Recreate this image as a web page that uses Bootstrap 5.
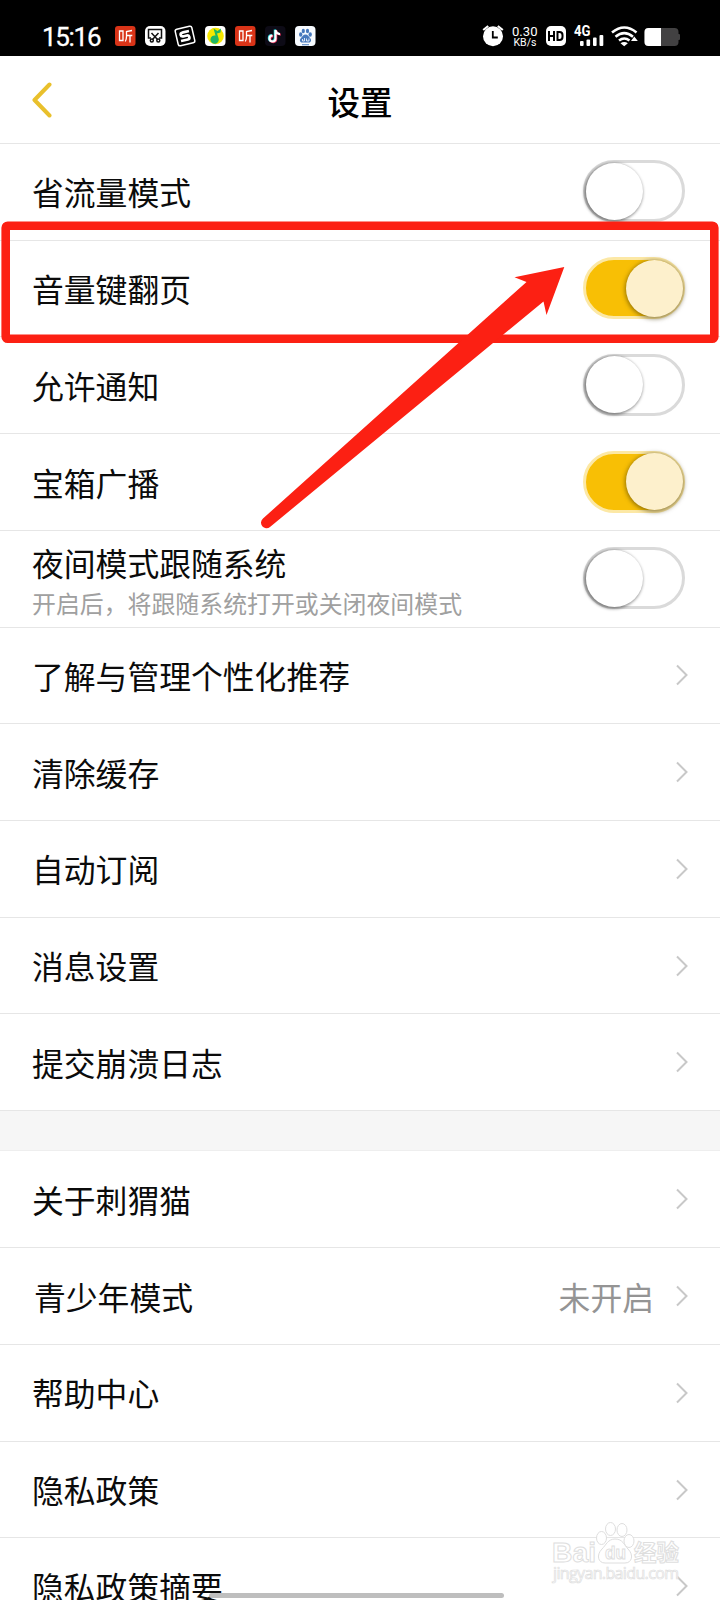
<!DOCTYPE html>
<html lang="zh-CN">
<head>
<meta charset="utf-8">
<meta name="viewport" content="width=device-width, initial-scale=1">
<title>设置</title>
<link href="https://cdn.jsdelivr.net/npm/bootstrap@5.3.0/dist/css/bootstrap.min.css" rel="stylesheet">
<style>
  body { font-family: Roboto, "Noto Sans CJK SC", sans-serif; color: #0b0b0b; background: #fff; }
  .phone { width: 720px; height: 1600px; }
  .statusbar { height: 56px; padding: 16px 40px 0 42px; background: #000; color: #fff; }
  .clock { font-size: 26px; line-height: 42px; width: 73px; letter-spacing: -1.3px; -webkit-text-stroke: .3px #fff; }
  .statusbar svg { display: block; flex: none; }
  .topbar { height: 88px; border-bottom: 1px solid #e6e6e6; padding: 0 32px; }
  .topbar h1 { font: 500 32.5px/48px "Noto Sans CJK SC", sans-serif; color: #000; padding-top: 2px; }
  .back, .side { width: 24px; }
  .setting { height: 96.72px; border: 0; border-bottom: 1px solid #e6e6e6; border-radius: 0; padding: 0 31px 0 32px;
             font: 400 31.8px/44px "Noto Sans CJK SC", sans-serif; color: #0b0b0b; background: #fff; }
  .setting small { font-size: 23.9px; line-height: 38px; color: #a0a0a0; }
  .label-text { padding-bottom: 1px; }
  .label-text.two-line { padding: 5px 0 0; }
  .youth { padding-left: 2px; }
  .setting .state { color: #949494; margin-right: 21px; }
  .switch { width: 102px; height: 62px; border: 3px solid #dadada; border-radius: 31px; margin: 0 4px 1px 0; }
  .knob { width: 57px; height: 57px; border-radius: 50%; background: #fff; margin: -.5px; box-shadow: -1px 1px 3px 1px rgba(0,0,0,.42); }
  .switch.on { border-color: #fce8a5; background: #f8bf05; justify-content: flex-end; }
  .switch.on .knob { background: #fdf0cc; box-shadow: 0 1px 4px 1px rgba(70,55,0,.55); }
  .gap-band { height: 40.3px; background: #f6f6f6; border-bottom: 1px solid #eee; }
  .homebar { left: 209px; top: 1593px; width: 295px; height: 5px; background: #bebebe; }
</style>
</head>
<body>
<div class="phone position-relative overflow-hidden">
  <header class="statusbar d-flex">
    <div class="clock">15:16</div>
    <svg width="202" height="40" viewBox="115 16 202 40">
      <g id="listen">
        <rect x="115" y="26" width="20.5" height="20" rx="3" fill="#d93418"/>
        <g fill="none" stroke="#fff" stroke-width="1.3"><path d="M119.500 31h3.500v9.500h-3.500zM132 30.500l-5.500 1v5q0 3-1.200 5M126.500 35.500h5.800M130 35.500v7"/></g>
      </g>
      <g>
        <rect x="145" y="26" width="20.500" height="20" rx="5" fill="#fff"/>
        <g fill="none" stroke="#111" stroke-width="1.500"><path d="M151 38h-2.500v-8.500h13v8.500H159M151.500 33l6 6.500M158.500 33l-6 6.500"/><circle cx="151.800" cy="40.500" r="1.500"/><circle cx="158.300" cy="40.500" r="1.500"/></g>
      </g>
      <g transform="rotate(-13 185 36)" fill="none" stroke="#fff">
        <rect x="176.500" y="27.500" width="17" height="17" rx="2" stroke-width="1.500"/>
        <path d="M190 32h-6q-3 0-3 2t3 2h3q2 0 2 2t-2 2h-7" stroke-width="2.700"/>
      </g>
      <rect x="205" y="26" width="20.500" height="20" rx="4" fill="#fff"/>
      <circle cx="215.500" cy="36" r="8.300" fill="#f7e800"/>
      <path d="M213.500 28.500l4 2.500 3.500-2.500-.5 4-3.500 1 1.500 4.500a4.200 4.200 0 1 1-3-2.500z" fill="#20b663"/>
      <use href="#listen" x="120"/>
      <rect x="265" y="26" width="20.500" height="20" rx="4" fill="#0d0b16"/>
      <g fill="none" stroke-width="2.100"><path d="M275.500 30v8.500a3 3 0 1 1-3-3M275.500 30q1 4 4.500 4" stroke="#27d9df" transform="translate(-.7 -.5)"/><path d="M275.500 30v8.500a3 3 0 1 1-3-3M275.500 30q1 4 4.500 4" stroke="#ef3460" transform="translate(.7 .6)"/><path d="M275.500 30v8.500a3 3 0 1 1-3-3M275.500 30q1 4 4.500 4" stroke="#fff"/></g>
      <rect x="295" y="26" width="20.500" height="20" rx="4" fill="#f7fbff"/>
      <g fill="#4779bd"><ellipse cx="300.700" cy="34.500" rx="1.700" ry="2.200"/><ellipse cx="303.300" cy="31" rx="1.600" ry="2.200"/><ellipse cx="307.500" cy="31" rx="1.600" ry="2.200"/><ellipse cx="310.200" cy="34.500" rx="1.700" ry="2.200"/><path d="M305.500 34.500c2.500 0 3 2 4.500 3.500 2 2 1 4.500-1 4.500h-7c-2 0-3-2.500-1-4.500 1.500-1.500 2-3.500 4.500-3.500zM302 44.300h7v1h-7z"/></g>
      <path d="M302.500 39v2h2v-3M306.500 38.500v2.500h2.500v-2.500" fill="none" stroke="#fff" stroke-width=".8"/>
    </svg>
    <svg class="ms-auto" width="200" height="40" viewBox="480 16 200 40" font-family="Roboto, sans-serif" fill="#fff">
      <circle cx="493" cy="36.200" r="10"/>
      <path d="M483.200 30l5-4M497.800 26l5 4" stroke="#fff" stroke-width="2.200"/>
      <path d="M492.800 31v6.500h5" fill="none" stroke="#000" stroke-width="1.800"/>
      <text x="512" y="35.500" font-size="13" textLength="25.500" lengthAdjust="spacingAndGlyphs">0.30</text>
      <text x="513.500" y="46" font-size="10.800" textLength="23" lengthAdjust="spacingAndGlyphs">KB/s</text>
      <rect x="546" y="26" width="20" height="20" rx="5"/>
      <path d="M549 31v10M554 31v10M549 36h5M557.500 32v8h2q3 0 3-3v-2q0-3-3-3z" fill="none" stroke="#000" stroke-width="2"/>
      <text x="574" y="36" font-size="14" font-weight="700" textLength="16.500" lengthAdjust="spacingAndGlyphs">4G</text>
      <rect x="580" y="41" width="3.600" height="5" rx="1"/><rect x="586.500" y="39.500" width="3.600" height="6.500" rx="1"/><rect x="593" y="37.500" width="3.600" height="8.500" rx="1"/><rect x="599.500" y="35" width="3.800" height="11" rx="1"/>
      <g fill="none" stroke="#fff" stroke-width="2.600"><path d="M612 32.500q12.300-10 24.500 0M615.500 36.700q8.700-7 17.500 0M619 40.500q5.300-4 10.500 0"/></g>
      <path d="M620.500 43.300q3.700-2.800 7.400 0l-3.700 3zM631 41l3.300-4.500 3.500 4.500z"/>
      <rect x="644.500" y="28" width="34" height="18" rx="4" fill="#424142"/><rect x="677" y="34" width="3" height="6" rx="1" fill="#424142"/>
      <path d="M661 28v18h-12.500q-4 0-4-4V32q0-4 4-4z"/>
    </svg>
  </header>

  <nav class="topbar d-flex align-items-center justify-content-between">
    <svg class="back" width="24" height="40" viewBox="0 0 24 40"><path d="M17.500 4.500L2.500 20 17.500 35.500" fill="none" stroke="#e9c02c" stroke-width="4" stroke-linecap="round" stroke-linejoin="round"/></svg>
    <h1 class="m-0">设置</h1>
    <span class="side"></span>
  </nav>

  <svg class="d-none"><symbol id="chev" viewBox="0 0 14 22"><path d="M2 1.500L11.500 11 2 20.500" fill="none" stroke="#c8c8c8" stroke-width="2"/></symbol></svg>

  <main>
    <div class="list-group list-group-flush">
      <div class="setting d-flex align-items-center justify-content-between"><span class="label-text">省流量模式</span><span class="switch d-flex"><span class="knob"></span></span></div>
      <div class="setting d-flex align-items-center justify-content-between"><span class="label-text">音量键翻页</span><span class="switch on d-flex"><span class="knob"></span></span></div>
      <div class="setting d-flex align-items-center justify-content-between"><span class="label-text">允许通知</span><span class="switch d-flex"><span class="knob"></span></span></div>
      <div class="setting d-flex align-items-center justify-content-between"><span class="label-text">宝箱广播</span><span class="switch on d-flex"><span class="knob"></span></span></div>
      <div class="setting d-flex align-items-center justify-content-between"><span class="label-text two-line d-flex flex-column">夜间模式跟随系统<small>开启后，将跟随系统打开或关闭夜间模式</small></span><span class="switch d-flex"><span class="knob"></span></span></div>
      <div class="setting d-flex align-items-center justify-content-between"><span class="label-text">了解与管理个性化推荐</span><svg width="14" height="22"><use href="#chev"/></svg></div>
      <div class="setting d-flex align-items-center justify-content-between"><span class="label-text">清除缓存</span><svg width="14" height="22"><use href="#chev"/></svg></div>
      <div class="setting d-flex align-items-center justify-content-between"><span class="label-text">自动订阅</span><svg width="14" height="22"><use href="#chev"/></svg></div>
      <div class="setting d-flex align-items-center justify-content-between"><span class="label-text">消息设置</span><svg width="14" height="22"><use href="#chev"/></svg></div>
      <div class="setting d-flex align-items-center justify-content-between"><span class="label-text">提交崩溃日志</span><svg width="14" height="22"><use href="#chev"/></svg></div>
    </div>
    <div class="gap-band"></div>
    <div class="list-group list-group-flush">
      <div class="setting d-flex align-items-center justify-content-between"><span class="label-text">关于刺猬猫</span><svg width="14" height="22"><use href="#chev"/></svg></div>
      <div class="setting d-flex align-items-center"><span class="label-text youth me-auto">青少年模式</span><span class="state">未开启</span><svg width="14" height="22"><use href="#chev"/></svg></div>
      <div class="setting d-flex align-items-center justify-content-between"><span class="label-text">帮助中心</span><svg width="14" height="22"><use href="#chev"/></svg></div>
      <div class="setting d-flex align-items-center justify-content-between"><span class="label-text">隐私政策</span><svg width="14" height="22"><use href="#chev"/></svg></div>
      <div class="setting d-flex align-items-center justify-content-between"><span class="label-text">隐私政策摘要</span><svg width="14" height="22"><use href="#chev"/></svg></div>
    </div>
  </main>

  <div class="homebar position-absolute rounded-pill"></div>

  <!-- highlight frame and pointing arrow -->
  <svg class="position-absolute top-0 start-0" width="720" height="560" viewBox="0 0 720 560">
    <rect x="5.700" y="225.700" width="708.600" height="113" rx="2" fill="none" stroke="#fc2013" stroke-width="8.600"/>
    <path d="M263 518.500L526.500 282 514.500 277.300 564.300 267 546.500 315 543.500 301.500 270 527A5.500 5.500 0 0 1 263 518.500z" fill="#fc2013"/>
  </svg>

  <!-- site watermark -->
  <svg class="position-absolute bottom-0 end-0" width="180" height="90" viewBox="540 1510 180 90" fill="#fff" stroke="#dedede" stroke-width="1">
    <g font-family="'Liberation Sans', sans-serif" font-weight="700">
      <text x="552" y="1562" font-size="28" textLength="44" lengthAdjust="spacingAndGlyphs">Bai</text>
      <ellipse cx="601.500" cy="1538" rx="5" ry="6.500"/><ellipse cx="610.500" cy="1529" rx="5" ry="6.500"/><ellipse cx="622" cy="1530" rx="5" ry="6.500"/><ellipse cx="629" cy="1541" rx="5" ry="6.500"/>
      <path d="M615 1539c8 0 9 6 13 10 6 6 4 14-3 14h-20c-7 0-9-8-3-14 4-4 6-10 13-10z"/>
      <text x="605" y="1559" font-size="19" textLength="21" lengthAdjust="spacingAndGlyphs">du</text>
      <text x="634" y="1561" font-size="22.500" textLength="45" font-family="'Noto Sans CJK SC', sans-serif">经验</text>
    </g>
    <text x="553" y="1579" font-size="16" textLength="126" font-family="'Open Sans', sans-serif" stroke-width=".7">jingyan.baidu.com</text>
  </svg>
</div>
<script src="https://cdn.jsdelivr.net/npm/bootstrap@5.3.0/dist/js/bootstrap.bundle.min.js"></script>
</body>
</html>
